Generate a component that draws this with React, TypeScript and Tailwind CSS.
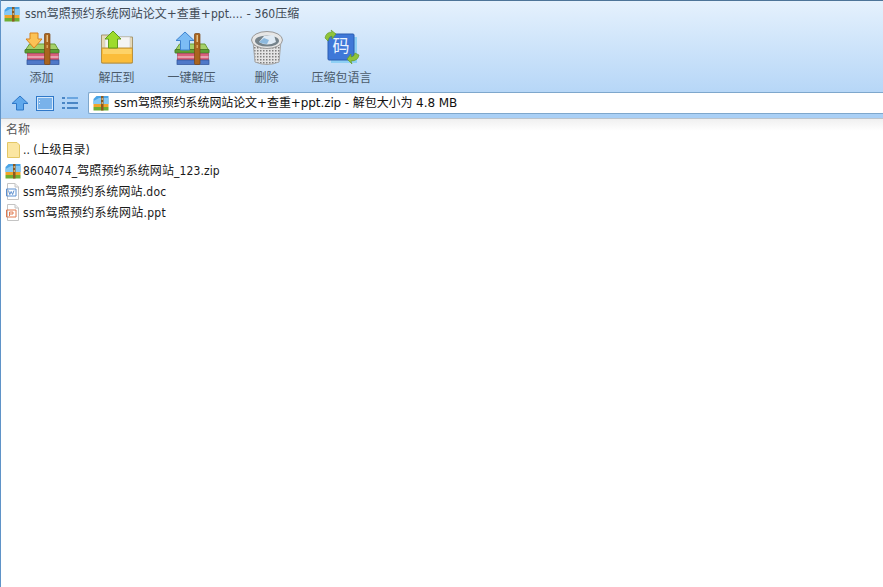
const font = { fontFamily: '"DejaVu Sans Condensed", "Noto Sans CJK SC", sans-serif' };

function ZipIcon({ size = 16 }: { size?: number }) {
  return (
    <svg width={size} height={size} viewBox="0 0 16 16" className="shrink-0">
      <path d="M0.5 4 L3.5 1 H15.5 V9 H0.5 Z" fill="#4aa4e6" />
      <path d="M0.5 6 L6 3 H15.5 V9 H0.5 Z" fill="#86c8f4" />
      <rect x="0.5" y="9" width="15" height="3" fill="#f0a52a" />
      <rect x="0.5" y="12" width="15" height="3.5" fill="#6fae33" />
      <rect x="8" y="1" width="2.5" height="14.5" fill="#8a5a22" />
      <rect x="8.7" y="3" width="1" height="2" fill="#e8d2a0" />
      <rect x="8.7" y="7" width="1" height="2" fill="#e8d2a0" />
    </svg>
  );
}

function Books({ arrow }: { arrow: "down" | "up" }) {
  return (
    <svg width="36" height="36" viewBox="0 0 36 36">
      <path d="M1.5 21 L5.5 15 H31 L34.5 21 Z" fill="#a4d069" stroke="#6a9c3a" />
      <rect x="1" y="20.5" width="34" height="3.5" rx="0.5" fill="#5f9e35" stroke="#4c7f2a" />
      <rect x="3.5" y="24.5" width="31" height="6.5" fill="#d9607a" stroke="#a8405a" strokeWidth="0.7" />
      <rect x="3.5" y="27.5" width="31" height="1" fill="#f3dfe2" />
      <rect x="3" y="31" width="32" height="4.5" fill="#4f78c8" stroke="#2c4f96" strokeWidth="0.7" />
      <rect x="20.5" y="4.5" width="5.5" height="31" rx="1" fill="#a9651f" stroke="#7b4514" strokeWidth="0.7" />
      <rect x="22.5" y="6" width="1.5" height="7" fill="#e5c187" />
      <rect x="22.5" y="16" width="1.5" height="3" fill="#d9a45c" />
      {arrow === "down" ? (
        <path d="M6 4 H14 V10 H18 L10 19 L2 10 H6 Z" fill="#fbc255" stroke="#d9821d" />
      ) : (
        <path d="M11 3 L20 11.5 H15.5 V21 H6.5 V11.5 H2 Z" fill="#7cbcf5" stroke="#3f83cf" />
      )}
    </svg>
  );
}

function FolderBig() {
  return (
    <svg width="36" height="36" viewBox="0 0 36 36">
      <path d="M2.5 34 V6 H10 L12 8 H33.5 V34 Z" fill="#e7d9b4" stroke="#a5966f" />
      <path d="M6 8 H31 V20 H6 Z" fill="#f4f4f4" stroke="#c9c9c9" strokeWidth="0.6" />
      <path d="M2.5 19 H33.5 V32.5 Q33.5 34 32 34 H4 Q2.5 34 2.5 32.5 Z" fill="#fbbd3a" stroke="#b9923f" />
      <path d="M4 20 H32.5 V25 H4 Z" fill="#fdd368" />
      <path d="M14 2 L22 10 H18.5 V19 H9.5 V10 H6 Z" fill="#9ddb2c" stroke="#5f9c1c" />
    </svg>
  );
}

function TrashBig() {
  return (
    <svg width="34" height="38" viewBox="0 0 34 38">
      <defs>
        <pattern id="mesh" width="3" height="3" patternUnits="userSpaceOnUse">
          <rect width="3" height="3" fill="#e4e4e4" />
          <rect x="1" y="1" width="1.5" height="1.5" fill="#7d7d7d" />
        </pattern>
      </defs>
      <path d="M3 13 L5 34 Q17 39 29 34 L31 13 Z" fill="url(#mesh)" stroke="#a5a5a5" />
      <ellipse cx="17" cy="12" rx="15.5" ry="8.5" fill="#e6e6e6" stroke="#9a9a9a" />
      <ellipse cx="17" cy="13" rx="12" ry="5.5" fill="#75828a" />
      <path d="M9 14 L14 8 L24 7 L26 14 Q17 19 9 14 Z" fill="#dfeaf4" />
      <path d="M9 14 L14 10 L19 12 L17 16 Q12 16 9 14 Z" fill="#8db9de" />
    </svg>
  );
}

function LangIcon() {
  return (
    <svg width="36" height="36" viewBox="0 0 36 36">
      <rect x="7" y="8" width="26" height="26" fill="#8ed0f5" />
      <rect x="4" y="5" width="26" height="26" rx="1" fill="#3f78d8" stroke="#2a5cb0" />
      <path d="M1 9 Q2 3 8 3 L7 1 L12 5 L8 10 L8 7 Q5 7 4 12 Z" fill="#8fc43a" stroke="#5f9420" strokeWidth="0.6" />
      <path d="M35 26 Q34 32 27 32 L28 35 L23 30 L27 25 L27 28 Q30 28 31 24 Z" fill="#8fc43a" stroke="#5f9420" strokeWidth="0.6" />
      <text x="17" y="23" textAnchor="middle" fontSize="17" fill="#eaf3ff" fontFamily='"Noto Sans CJK SC", sans-serif'>码</text>
    </svg>
  );
}

function UpArrow() {
  return (
    <svg width="18" height="16" viewBox="0 0 18 16">
      <path d="M9 1 L17 8.5 H12.5 V15 H5.5 V8.5 H1 Z" fill="#5fa8ec" stroke="#2f78c8" />
    </svg>
  );
}

function ViewIcon() {
  return (
    <svg width="18" height="15" viewBox="0 0 18 15">
      <rect x="0.5" y="0.5" width="17" height="14" fill="#d5e8fa" stroke="#2f78c8" />
      <rect x="2" y="2" width="14" height="11" fill="#79b2ea" />
      <rect x="3" y="4" width="1" height="1" fill="#e8f3fd" />
      <rect x="3" y="7" width="1" height="1" fill="#e8f3fd" />
    </svg>
  );
}

function ListIcon() {
  return (
    <svg width="16" height="15" viewBox="0 0 16 15" fill="#4a86c5">
      <rect x="0" y="1" width="3" height="2" />
      <rect x="5" y="1" width="11" height="2" fill="#6ba6e0" />
      <rect x="0" y="6" width="3" height="2" />
      <rect x="5" y="6" width="11" height="2" />
      <rect x="0" y="11" width="3" height="2" />
      <rect x="5" y="11" width="11" height="2" />
    </svg>
  );
}

function SmallFolder() {
  return (
    <svg width="16" height="18" viewBox="0 0 16 18" className="shrink-0">
      <path d="M2.5 1.5 H12 L14.5 4 V16.5 H2.5 Z" fill="#fbe6a2" stroke="#e3c766" />
    </svg>
  );
}

function DocFile({ color, letter }: { color: string; letter: "w" | "p" }) {
  return (
    <svg width="16" height="17" viewBox="0 0 16 17" className="shrink-0">
      <path d="M2.5 0.5 H10 L13.5 4 V16.5 H2.5 Z" fill="#fff" stroke="#c4c4c4" />
      <path d="M10 0.5 V4 H13.5" fill="#eee" stroke="#c4c4c4" />
      {letter === "w" ? (
        <path d="M1.5 6 H11 V13 H1.5 Z M3.5 7.5 L4.8 11.5 L6.2 8.5 L7.6 11.5 L9 7.5" fill="none" stroke={color} />
      ) : (
        <path d="M1.5 6 H11 V13 H1.5 Z M4.5 12 V8 H8 V10 H4.5" fill="none" stroke={color} />
      )}
    </svg>
  );
}

const tools = [
  { label: "添加", icon: <Books arrow="down" /> },
  { label: "解压到", icon: <FolderBig /> },
  { label: "一键解压", icon: <Books arrow="up" /> },
  { label: "删除", icon: <TrashBig /> },
  { label: "压缩包语言", icon: <LangIcon /> },
];

const rows = [
  { name: ".. (上级目录)", icon: <SmallFolder />, track: "" },
  { name: "8604074_驾照预约系统网站_123.zip", icon: <ZipIcon />, track: "tracking-[0.1px]" },
  { name: "ssm驾照预约系统网站.doc", icon: <DocFile color="#5b8fd0" letter="w" />, track: "tracking-[0.18px]" },
  { name: "ssm驾照预约系统网站.ppt", icon: <DocFile color="#e07a50" letter="p" />, track: "tracking-[0.25px]" },
];

const wide = "font-['DejaVu_Sans','Noto_Sans_CJK_SC',sans-serif]";

export default function App() {
  return (
    <div style={font} className="w-[883px] h-[587px] overflow-hidden bg-white flex flex-col border-l border-[#5f93c8] text-[12px] leading-[16px] text-[#1a1a1a]">
      <div className="h-[119px] shrink-0 flex flex-col border-t border-b border-t-[#4d7498] border-b-[#bcc4cc] bg-gradient-to-b from-[#e5f1fd] to-[#a9cff5]">
        <div className="h-[26px] flex items-center pl-[3px] gap-[5px] text-[#404a55]">
          <ZipIcon />
          <span>
            ssm驾照预约系统网站论文<span className={wide}>+</span>查重<span className={wide}>+</span>ppt....<span className={wide}> - </span>360压缩
          </span>
        </div>
        <div className="h-[65px] flex pl-[3px] pt-[1px]">
          {tools.map((t) => (
            <div key={t.label} className="w-[75px] flex flex-col items-center text-[#4a5a6a]">
              <div className="h-[38px] flex items-center justify-center">{t.icon}</div>
              <span className="mt-[4px]">{t.label}</span>
            </div>
          ))}
        </div>
        <div className="h-[22px] flex">
          <div className="w-[87px] flex items-center pl-[10px]">
            <UpArrow />
            <span className="w-[7px]" />
            <ViewIcon />
            <span className="w-[8px]" />
            <ListIcon />
          </div>
          <div className="flex-1 bg-white border-y border-l border-[#7ea7cc] rounded-l-[2px] flex items-center pl-[4px] gap-[5px] text-[#111]">
            <ZipIcon />
            <span className={wide + " tracking-[-0.09px]"}>ssm驾照预约系统网站论文+查重+ppt.zip - 解包大小为 4.8 MB</span>
          </div>
        </div>
      </div>
      <div className="flex-1 bg-gradient-to-b from-[#f0f0f0] to-white to-[12px] px-[4px]">
        <div className="h-[20px] pt-[1px] flex items-center pl-[1px] text-[#555]">名称</div>
        <div className="flex flex-col">
          {rows.map((r) => (
            <div key={r.name} className="h-[21px] flex items-center gap-[2px]">
              {r.icon}
              <span className={r.track}>{r.name}</span>
            </div>
          ))}
        </div>
      </div>
    </div>
  );
}
